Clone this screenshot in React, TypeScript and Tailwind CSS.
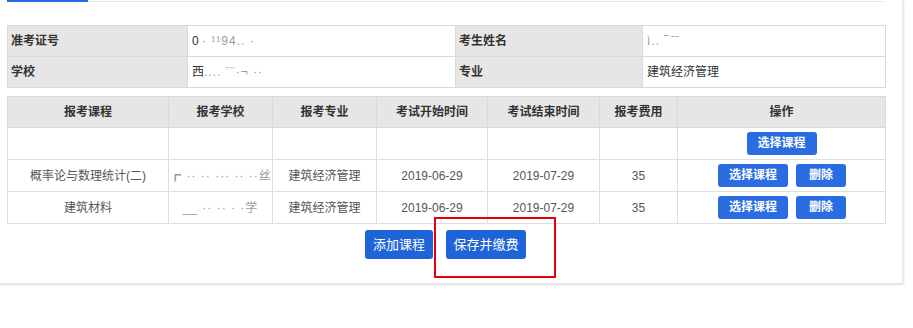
import React from "react";

const font = { fontFamily: '"Liberation Sans", "Noto Sans CJK SC", sans-serif' };

function Blur({ children }: { children: React.ReactNode }) {
  return <span className="text-[#9a9a9a] tracking-[1px]">{children}</span>;
}

function SmallBtn({ w, children }: { w: string; children: React.ReactNode }) {
  return (
    <button className={`${w} h-[23px] rounded-[3px] bg-[#2a6de3] text-white text-[12px] font-bold leading-[23px]`}>
      {children}
    </button>
  );
}

export default function App() {
  const rows = [
    { c: "概率论与数理统计(二)", s: <Blur>┏ ·· ·· ··· ·· ··丝</Blur> },
    { c: "建筑材料", s: <Blur>__ ·· ·· · ·学</Blur> },
  ];
  return (
    <div className="relative w-[913px] h-[328px] bg-white text-[#333]" style={font}>
      <div className="w-[904px] h-[283px] border-r-2 border-[#ececec] shadow-[0_2px_2px_rgba(0,0,0,0.12)] flex flex-col">
        <div className="flex h-[3px]">
          <div className="w-[7px]" />
          <div className="w-[81px] h-[2px] bg-[#1f6fe0]" />
          <div className="w-[797px] h-[2px] border-b border-[#e8e8e8]" />
        </div>
        <div className="px-[7px] pt-[22px] w-[892px]">
          <table className="border-collapse w-[878px] text-[12px] table-fixed">
            <colgroup>
              <col className="w-[180px]" />
              <col className="w-[268px]" />
              <col className="w-[187px]" />
              <col className="w-[243px]" />
            </colgroup>
            <tbody>
              <tr className="h-[31px]">
                <td className="border border-[#d9d9d9] bg-[#e6e6e6] font-bold pl-[3px]">准考证号</td>
                <td className="border border-[#d9d9d9] pl-[4px]">0 <Blur>· ¹¹94.. ·</Blur></td>
                <td className="border border-[#d9d9d9] bg-[#e6e6e6] font-bold pl-[3px]">考生姓名</td>
                <td className="border border-[#d9d9d9] pl-[4px]"><Blur>ì.. ‾ ̄ ̄</Blur></td>
              </tr>
              <tr className="h-[31px]">
                <td className="border border-[#d9d9d9] bg-[#e6e6e6] font-bold pl-[3px]">学校</td>
                <td className="border border-[#d9d9d9] pl-[4px]">西<Blur>.... ¨¨·¬ ··</Blur></td>
                <td className="border border-[#d9d9d9] bg-[#e6e6e6] font-bold pl-[3px]">专业</td>
                <td className="border border-[#d9d9d9] pl-[4px]">建筑经济管理</td>
              </tr>
            </tbody>
          </table>
          <table className="mt-[8px] border-collapse w-[878px] text-[12px] table-fixed text-center">
            <colgroup>
              <col className="w-[161px]" />
              <col className="w-[104px]" />
              <col className="w-[104px]" />
              <col className="w-[111px]" />
              <col className="w-[112px]" />
              <col className="w-[78px]" />
              <col className="w-[208px]" />
            </colgroup>
            <thead>
              <tr className="h-[31px] bg-[#e6e6e6]">
                {["报考课程", "报考学校", "报考专业", "考试开始时间", "考试结束时间", "报考费用", "操作"].map((h) => (
                  <th key={h} className="border border-[#d9d9d9] font-bold">{h}</th>
                ))}
              </tr>
            </thead>
            <tbody className="text-[#555]">
              <tr className="h-[32px]">
                <td className="border border-[#dedede]" />
                <td className="border border-[#dedede]" />
                <td className="border border-[#dedede]" />
                <td className="border border-[#dedede]" />
                <td className="border border-[#dedede]" />
                <td className="border border-[#dedede]" />
                <td className="border border-[#dedede]">
                  <div className="flex justify-center"><SmallBtn w="w-[70px]">选择课程</SmallBtn></div>
                </td>
              </tr>
              {rows.map((r, i) => (
                <tr key={i} className="h-[32px]">
                  <td className="border border-[#dedede]">{r.c}</td>
                  <td className="border border-[#dedede]">{r.s}</td>
                  <td className="border border-[#dedede]">建筑经济管理</td>
                  <td className="border border-[#dedede]">2019-06-29</td>
                  <td className="border border-[#dedede]">2019-07-29</td>
                  <td className="border border-[#dedede]">35</td>
                  <td className="border border-[#dedede]">
                    <div className="flex justify-center gap-[8px] pl-[1px]">
                      <SmallBtn w="w-[70px]">选择课程</SmallBtn>
                      <SmallBtn w="w-[50px]">删除</SmallBtn>
                    </div>
                  </td>
                </tr>
              ))}
            </tbody>
          </table>
          <div className="flex justify-center gap-[13px] mt-[6px] pr-[1px]">
            <button className="w-[68px] h-[29px] rounded-[3px] bg-[#1f63d8] text-white text-[13px]">添加课程</button>
            <button className="w-[80px] h-[29px] rounded-[3px] bg-[#1f63d8] text-white text-[13px]">保存并缴费</button>
          </div>
        </div>
      </div>
      <div className="absolute left-[434px] top-[217px] w-[122px] h-[61px] border-2 border-[#e8000b]" />
    </div>
  );
}
